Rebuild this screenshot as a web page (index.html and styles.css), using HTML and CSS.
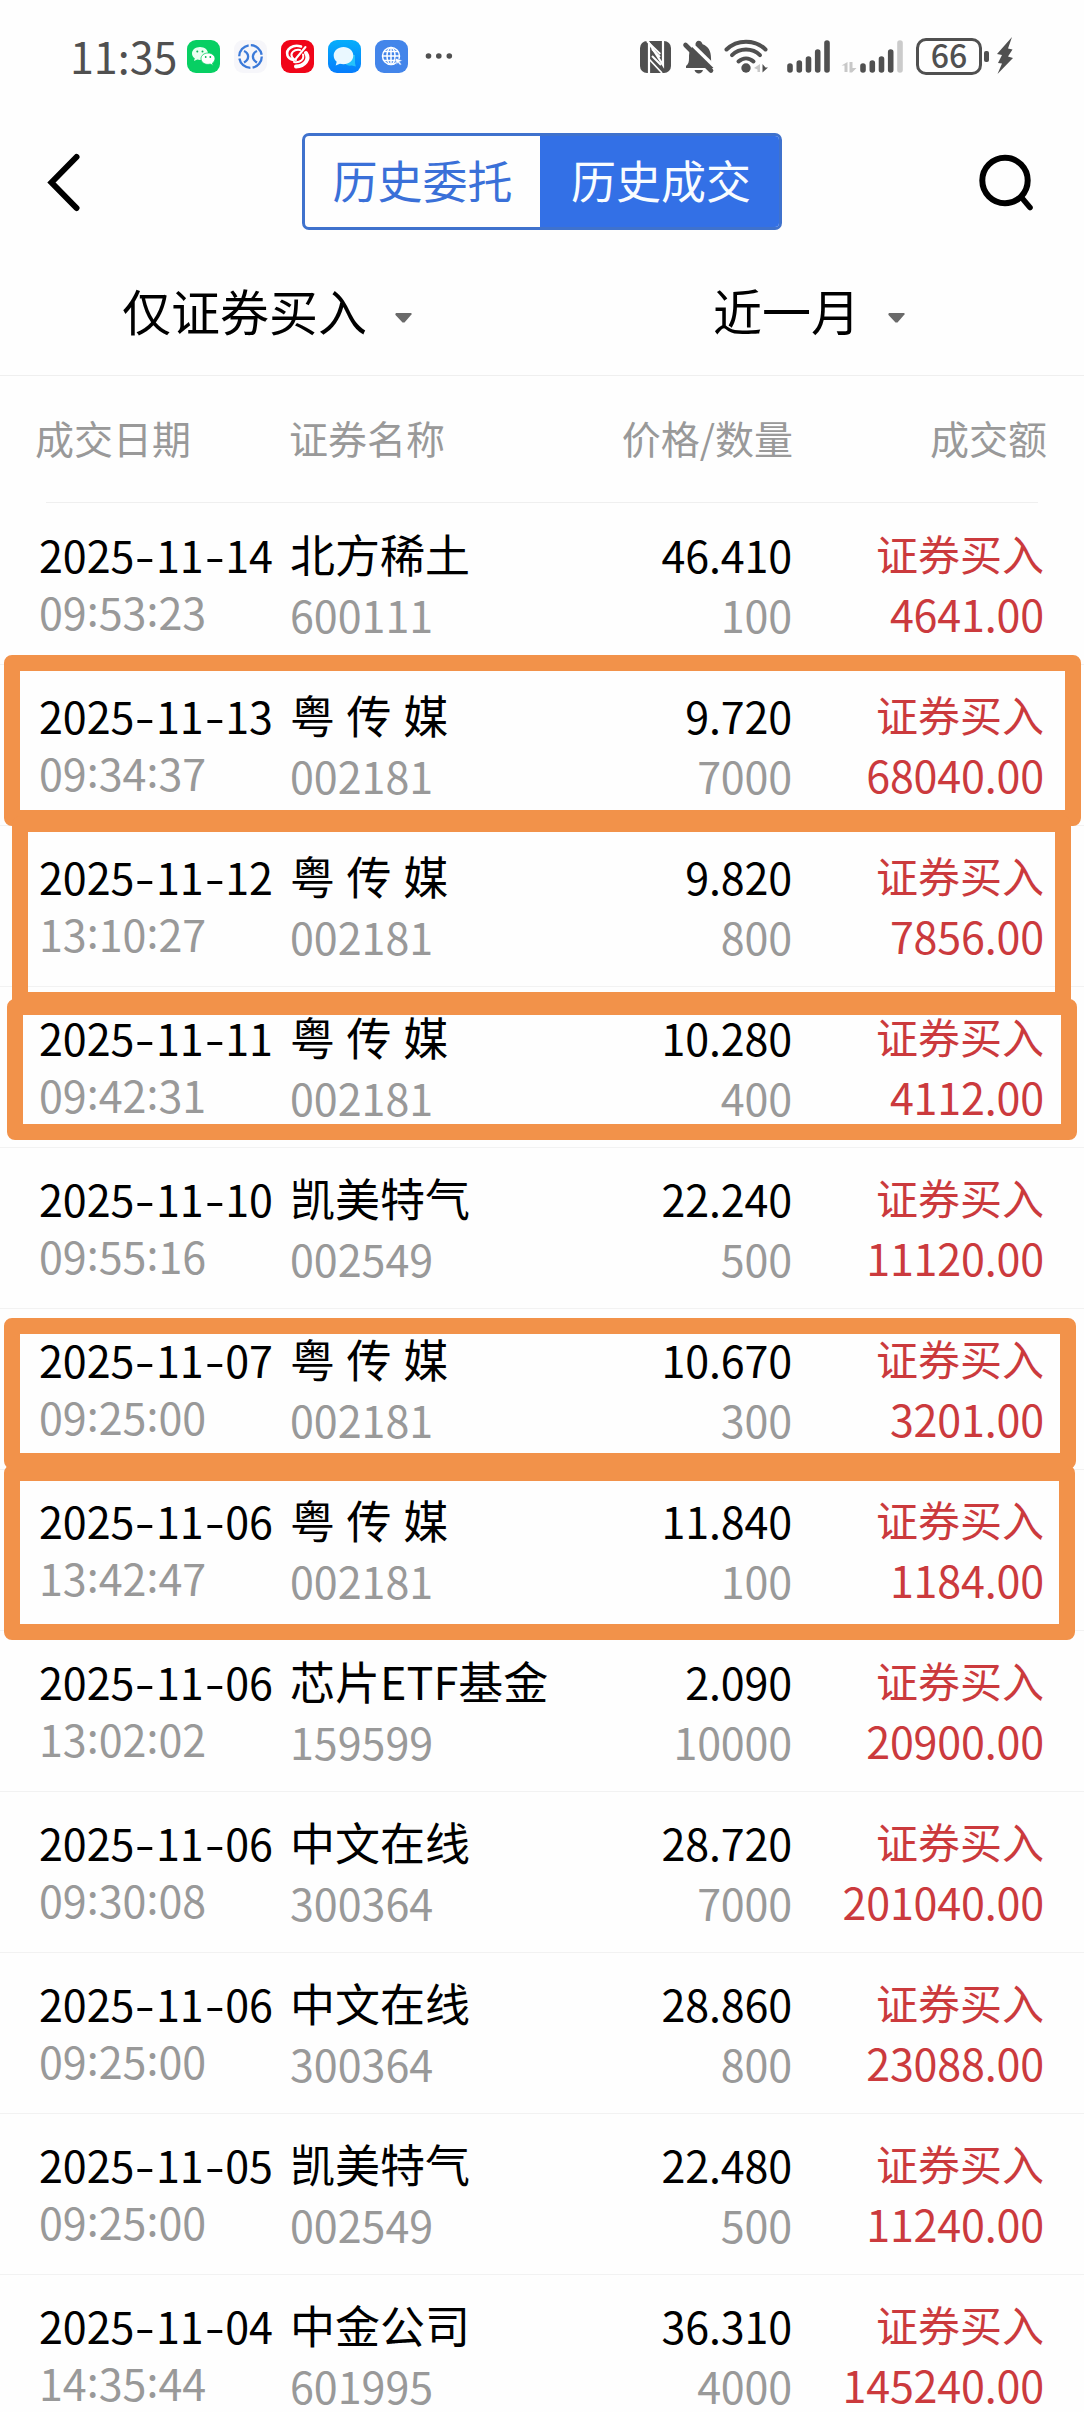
FILE: index.html
```html
<!DOCTYPE html>
<html lang="zh-CN">
<head>
    <meta charset="UTF-8">
    <title>历史成交</title>
    <link rel="stylesheet" href="styles.css">
</head>
<body>
<div class="screen">
    <div class="status-bar">
        <span class="clock">11:35</span>
        <div class="app-icons">
            <svg width="33" height="33" viewBox="0 0 33 33">
                <rect width="33" height="33" rx="9" fill="#07cf63"/>
                <path d="M13 7c-4.500 0-8 2.800-8 6.400 0 2 1.100 3.700 2.800 4.900L7 21l3.300-1.500c.9.200 1.800.4 2.700.4 4.500 0 8-2.900 8-6.500S17.500 7 13 7z" fill="#e9fff1"/>
                <path d="M21 13c-3.900 0-7 2.500-7 5.700s3.100 5.700 7 5.700c.8 0 1.600-.1 2.300-.3l2.900 1.300-.7-2.400c1.500-1 2.500-2.600 2.500-4.300 0-3.200-3.100-5.700-7-5.700z" fill="#fff" stroke="#07cf63" stroke-width=".8"/>
                <g fill="#07b456"><circle cx="10.300" cy="11.500" r="1"/><circle cx="15.500" cy="11.500" r="1"/><circle cx="18.700" cy="17" r=".9"/><circle cx="23.300" cy="17" r=".9"/></g>
            </svg>
            <svg width="33" height="33" viewBox="0 0 33 33">
                <rect width="33" height="33" rx="9" fill="#f6f6fa"/>
                <g fill="none" stroke="#3b7ad9" stroke-width="2.300">
                    <circle cx="16.500" cy="16.500" r="11.300" stroke-dasharray="15.500 2.250"/>
                    <path d="M10 11c5.500 2.500 5.500 8.500 0 11.500M23 11c-5.500 2.500-5.500 8.500 0 11.500"/>
                </g>
            </svg>
            <svg width="33" height="33" viewBox="0 0 33 33">
                <rect width="33" height="33" rx="9" fill="#f00519"/>
                <g fill="none" stroke="#fff" stroke-linecap="round">
                    <path d="M20 6.500C12 4 4.500 9 6.500 15.500c1 3 4 4 6 4.500" stroke-width="2.600"/>
                    <path d="M19 10c-6-1-10 3-8 7 1 2 2.500 2.500 4 3" stroke-width="2"/>
                    <path d="M25 13c4 6-1 13-10 13.500" stroke-width="4"/>
                    <path d="M22 14.500c1.500 5-3 8.500-9 7.500" stroke-width="2"/>
                    <path d="M24.500 7L15 18.500" stroke-width="2"/>
                </g>
            </svg>
            <svg width="33" height="33" viewBox="0 0 33 33">
                <defs>
                    <linearGradient id="msg" x1="0" y1="0" x2="0" y2="1"><stop offset="0" stop-color="#05aefb"/><stop offset="1" stop-color="#067dfc"/></linearGradient>
                </defs>
                <rect width="33" height="33" rx="9" fill="url(#msg)"/>
                <path d="M19 15h8v8l.8 3.500-4-.9c-3 .5-6-.2-7-3z" fill="#25c2fb"/>
                <path d="M15.500 7c5.600 0 9.800 3.700 9.800 8.600s-4.200 8.600-9.800 8.600c-1.300 0-2.500-.2-3.600-.5L7.700 25.500l1-3.700c-1.900-1.500-3-3.700-3-6.200C5.700 10.700 9.900 7 15.500 7z" fill="#eaf8ff"/>
            </svg>
            <svg width="33" height="33" viewBox="0 0 33 33">
                <rect width="33" height="33" rx="9" fill="#4385ea"/>
                <g fill="none" stroke="#fff" stroke-width="1.500">
                    <circle cx="16" cy="16" r="8.500"/>
                    <ellipse cx="16" cy="16" rx="4" ry="8.500"/>
                    <path d="M16 7.500v17M7.500 16h17M9 11.500h14M9 20.500h12"/>
                </g>
                <path d="M20 18l7.500 2.500-3 1.200 2 2.500-1.500 1-2-2.500-1.300 2z" fill="#fff" stroke="#4385ea" stroke-width=".5"/>
            </svg>
        </div>
        <svg class="more" width="28" height="8" viewBox="0 0 28 8" fill="#505050">
            <circle cx="3.500" cy="4" r="2.800"/><circle cx="13.800" cy="4" r="2.800"/><circle cx="24.300" cy="4" r="2.800"/>
        </svg>

        <div class="system-icons">
            <!-- nfc -->
            <svg width="43" height="40" viewBox="0 0 43 40">
                <rect x="1" y="5" width="31" height="32" rx="7" fill="#505050"/>
                <path d="M10 38V7l14 22V4" fill="none" stroke="#fff" stroke-width="2.200"/>
                <path d="M7.800 5l13.500 13M10 23l13 14" fill="none" stroke="#fff" stroke-width="1.800"/>
                <path d="M13 13l8 8M13 20l9 9" fill="none" stroke="#fff" stroke-width="2"/>
            </svg>
            <!-- muted bell -->
            <svg width="41" height="40" viewBox="0 0 41 40">
                <path d="M4 32v-2c2.500-2 3-4 3-8 0-7 1.500-11 6.500-12.700C13 4 19 3 20.600 8.300 26 10 29 15 29 22c0 4 .5 7 3 10z" fill="#505050"/>
                <path d="M12.500 34h8.500c-1 4.500-7.500 4.500-8.500 0z" fill="#505050"/>
                <path d="M6 4.500l27 26.500" stroke="#fff" stroke-width="3.400"/>
                <path d="M3.500 9l25.500 25.500" stroke="#505050" stroke-width="4.600" stroke-linecap="round"/>
            </svg>
            <!-- wifi -->
            <svg width="62" height="40" viewBox="0 0 62 40">
                <g fill="none" stroke="#505050" stroke-width="4" stroke-linecap="round">
                    <path d="M3.500 13.500c10.500-10.500 28.500-10.500 39 0"/>
                    <path d="M9 19.200c7.500-7.500 20.500-7.500 28 0"/>
                    <path d="M15.500 25.500c4.500-4 10.500-4 15 0"/>
                </g>
                <circle cx="23" cy="32" r="4.700" fill="#505050"/>
                <path d="M37 28v8h-2.500v-2.500L31 32z" fill="#c8c8c8"/>
                <path d="M39.500 28v8.500l5.500-5h-2.500z" fill="#505050"/>
            </svg>
            <!-- sim 1 -->
            <svg width="54" height="40" viewBox="0 0 54 40">
                <path d="M5 34v-4M14.300 34v-7M23.500 34V23M32.700 34V16M42 34V7" stroke="#505050" stroke-width="5.600" stroke-linecap="round"/>
            </svg>
            <!-- sim 2 -->
            <svg width="77" height="40" viewBox="0 0 77 40">
                <path d="M8.500 26v10H5.500v-6.500H2.500zM10.500 26h3v6h4l-4.500 4.500h-2.500z" fill="#c8c8c8"/>
                <path d="M24 34v-4M33.300 34v-7M42.500 34V23M51.700 34V16" stroke="#505050" stroke-width="5.600" stroke-linecap="round"/>
                <path d="M61 34V7" stroke="#cbcbcb" stroke-width="5.600" stroke-linecap="round"/>
            </svg>
            <span class="battery">66</span>
            <span class="battery-cap"></span>
            <svg width="18" height="40" viewBox="0 0 18 40">
                <path d="M16 1L1 18l5 1-4 8 4 .5L1.500 38 17 22l-5-1.500 4.500-7-4.500-1z" fill="#505050"/>
            </svg>
        </div>
    </div>

    <div class="nav-bar">
        <svg class="back" width="36" height="60" viewBox="0 0 36 60">
            <path d="M30.500 5L5.500 30.500l25 25.500" fill="none" stroke="#000" stroke-width="6" stroke-linecap="round"/>
        </svg>
        <div class="tabs">
            <div class="tab">历史委托</div>
            <div class="tab active">历史成交</div>
        </div>
        <svg class="search" width="56" height="60" viewBox="0 0 56 60">
            <circle cx="26" cy="28.500" r="22.700" fill="none" stroke="#000" stroke-width="6"/>
            <path d="M43 46l8 9.500" stroke="#000" stroke-width="5.600" stroke-linecap="round"/>
        </svg>
    </div>

    <div class="filters">
        <div class="filter">仅证券买入<svg width="17" height="10" viewBox="0 0 17 10"><path d="M1 0h15q1.500 1 0 2L9.500 9.500h-2L.5 2Q0 1 1 0z" fill="#6a6a6a"/></svg></div>
        <div class="filter">近一月<svg width="17" height="10" viewBox="0 0 17 10"><path d="M1 0h15q1.500 1 0 2L9.500 9.500h-2L.5 2Q0 1 1 0z" fill="#6a6a6a"/></svg></div>
    </div>

    <div class="table-head">
        <span>成交日期</span>
        <span>证券名称</span>
        <span class="right">价格/数量</span>
        <span class="right">成交额</span>
    </div>

    <div class="trades" id="trades"></div>

    <!-- marker frames over the highlighted trades -->
    <div class="mark mark-1"></div>
    <div class="mark mark-2"></div>
    <div class="mark mark-3"></div>
    <div class="mark mark-4"></div>
    <div class="mark mark-5"></div>
</div>
<script src="trades.js"></script>
</body>
</html>
```
FILE: styles.css
```css
* { box-sizing: border-box; }
body { margin: 0; background: #fefefe; color: #000; font-family: "Noto Sans CJK SC", sans-serif; }
svg { display: block; flex: none; }
.screen { position: relative; height: 2412px; overflow: hidden; }

/* status bar */
.status-bar { display: flex; align-items: center; height: 112px; padding: 0 70px 0 70px; color: #505050; }
.clock { width: 117px; padding-bottom: 3px; font-size: 43px; line-height: 60px; }
.app-icons { display: flex; gap: 14px; }
.more { margin-left: 17px; }
.system-icons { display: flex; align-items: center; margin-left: auto; }
.battery { width: 66px; height: 37px; border: 3px solid #505050; border-radius: 10px; font-size: 32px; font-weight: 500; line-height: 27px; text-align: center; }
.battery-cap { width: 5px; height: 11px; margin: 0 7px 0 2px; border-radius: 2px; background: #505050; }

/* title bar */
.nav-bar { display: flex; align-items: center; height: 140px; padding: 0 49px 0 46px; }
.tabs { display: flex; width: 480px; height: 97px; margin: 0 auto 1px 220px; border: 3px solid #3f72cd; border-radius: 7px; overflow: hidden; }
.tab { width: 235px; color: #3a70d8; font-size: 45px; line-height: 88px; text-align: center; }
.tab.active { width: 239px; padding-left: 3px; background: #3370e6; color: #f8fcff; }

.filters { display: flex; height: 124px; border-bottom: 1px solid #efefef; }
.filter { display: flex; flex: none; align-items: center; width: 591px; height: 116px; padding-left: 122px; font-size: 49px; line-height: 116px; }
.filter + .filter { width: 493px; }
.filter svg { margin: 15px 0 0 28px; }

.table-head { display: grid; grid-template-columns: 254px 303px 201px 254px; height: 126px; padding-left: 35px; color: #999; font-size: 39px; line-height: 122px; }
.right { text-align: right; }

/* trade list */
.trades { padding-top: 2px; }
.trades::before { content: ""; display: block; height: 1px; margin: -2px 46px 1px; background: #efefef; }
.trade { display: grid; grid-template-columns: 251px 302px 200px 252px; height: 161px; padding-left: 39px; border-bottom: 1px solid #f2f2f2; font-size: 43px; white-space: nowrap; }
.sub { color: #999; }
.when { padding-top: 22px; line-height: 57px; }
.when i { font-style: normal; }
.dash { display: inline-block; width: 21.500px; text-align: center; transform: scaleX(1.350); }
.colon { vertical-align: 4px; line-height: 1; }
.stock { padding-top: 20px; line-height: 60px; }
.stock .name { font-size: 45px; word-spacing: 1.500px; }
.price { padding-top: 20px; line-height: 60px; text-align: right; }
.amount { padding-top: 19px; color: #cb3a3d; line-height: 60px; text-align: right; }
.amount .type { font-size: 42px; }
.price, .amount .sum { letter-spacing: -0.150px; }

.mark { position: absolute; border: 16px solid #f2924a; border-radius: 8px; }
.mark-1 { left: 4px; top: 655px; width: 1077px; height: 171px; }
.mark-2 { left: 12px; top: 816px; width: 1059px; height: 192px; }
.mark-3 { left: 7px; top: 999px; width: 1070px; height: 141px; }
.mark-4 { left: 4px; top: 1318px; width: 1072px; height: 151px; }
.mark-5 { left: 4px; top: 1465px; width: 1071px; height: 175px; }
```
FILE: trades.js
```js
const trades = [
    ['2025-11-14', '09:53:23', '北方稀土', '600111', '46.410', '100', '4641.00'],
    ['2025-11-13', '09:34:37', '粤 传 媒', '002181', '9.720', '7000', '68040.00'],
    ['2025-11-12', '13:10:27', '粤 传 媒', '002181', '9.820', '800', '7856.00'],
    ['2025-11-11', '09:42:31', '粤 传 媒', '002181', '10.280', '400', '4112.00'],
    ['2025-11-10', '09:55:16', '凯美特气', '002549', '22.240', '500', '11120.00'],
    ['2025-11-07', '09:25:00', '粤 传 媒', '002181', '10.670', '300', '3201.00'],
    ['2025-11-06', '13:42:47', '粤 传 媒', '002181', '11.840', '100', '1184.00'],
    ['2025-11-06', '13:02:02', '芯片ETF基金', '159599', '2.090', '10000', '20900.00'],
    ['2025-11-06', '09:30:08', '中文在线', '300364', '28.720', '7000', '201040.00'],
    ['2025-11-06', '09:25:00', '中文在线', '300364', '28.860', '800', '23088.00'],
    ['2025-11-05', '09:25:00', '凯美特气', '002549', '22.480', '500', '11240.00'],
    ['2025-11-04', '14:35:44', '中金公司', '601995', '36.310', '4000', '145240.00']
];

document.getElementById('trades').innerHTML = trades.map(([date, time, name, code, price, count, sum]) => `
    <div class="trade">
        <div class="when">
            <div>${date.replace(/-/g, '<i class="dash">-</i>')}</div>
            <div class="sub">${time.replace(/:/g, '<i class="colon">:</i>')}</div>
        </div>
        <div class="stock">
            <div class="name">${name}</div>
            <div class="sub">${code}</div>
        </div>
        <div class="price">
            <div>${price}</div>
            <div class="sub">${count}</div>
        </div>
        <div class="amount">
            <div class="type">证券买入</div>
            <div class="sum">${sum}</div>
        </div>
    </div>`).join('');
```
